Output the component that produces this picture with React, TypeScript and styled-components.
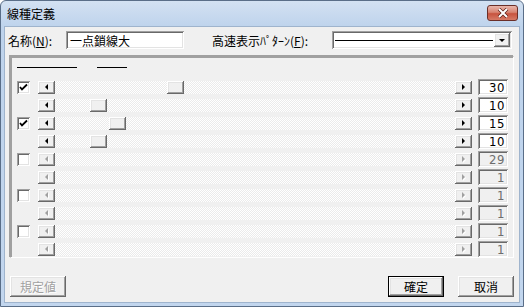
import styled, { createGlobalStyle } from "styled-components";

const GlobalStyle = createGlobalStyle`
  body {
    margin: 0;
    font-family: "Noto Sans CJK JP", "Liberation Sans", sans-serif;
    font-size: 12px;
    background: #fff;
  }
`;

const raised = `inset -1px -1px #696969, inset 1px 1px #ffffff, inset -2px -2px #a0a0a0, inset 2px 2px #e3e3e3`;
const sunken = `inset 1px 1px #a0a0a0, inset -1px -1px #ffffff, inset 2px 2px #696969, inset -2px -2px #e3e3e3`;

const Window = styled.div`
  width: 524px;
  height: 307px;
  box-sizing: border-box;
  border: 1px solid #5a6e88;
  border-radius: 6px 6px 0 0;
  background: linear-gradient(#d3e1f2, #bed3ec 26px, #c2d6ee);
  padding: 0 3px 3px 3px;
  display: flex;
  flex-direction: column;
`;

const TitleBar = styled.div`
  height: 25px;
  display: flex;
  align-items: center;
  justify-content: space-between;
  padding-left: 3px;
  padding-right: 2px;
`;

const Title = styled.span`
  font-size: 12px;
  color: #000;
  line-height: 1;
`;

const CloseButton = styled.div`
  width: 31px;
  height: 16px;
  margin-top: -2px;
  box-sizing: border-box;
  border: 1px solid #6b2f28;
  border-radius: 3px;
  background: linear-gradient(#e9b6ab, #d88472 45%, #c8543f 55%, #d67a66);
  display: flex;
  align-items: center;
  justify-content: center;
`;

const Client = styled.div`
  flex: 1;
  background: #f0f0f0;
  border: 1px solid #9fb4cd;
  display: flex;
  flex-direction: column;
`;

const TopRow = styled.div`
  display: flex;
  align-items: center;
  margin-top: 4px;
  padding-left: 3px;
  height: 18px;
`;

const Label = styled.span<{ $w: number; $ml?: number }>`
  width: ${(p) => p.$w}px;
  margin-left: ${(p) => p.$ml ?? 0}px;
  flex-shrink: 0;
  color: #000;
  white-space: nowrap;
`;

const TextField = styled.div`
  width: 118px;
  height: 18px;
  box-sizing: border-box;
  background: #fff;
  box-shadow: ${sunken};
  padding: 0 4px;
  display: flex;
  align-items: center;
  font-size: 12px;
`;

const Combo = styled.div`
  width: 180px;
  height: 18px;
  box-sizing: border-box;
  background: #fff;
  box-shadow: ${sunken};
  padding: 2px 2px 2px 3px;
  display: flex;
  align-items: center;
  gap: 1px;
`;

const ComboLine = styled.div`
  flex: 1;
  height: 1px;
  background: #000;
`;

const ComboButton = styled.div`
  width: 16px;
  height: 14px;
  background: #f0f0f0;
  box-shadow: ${raised};
  display: flex;
  align-items: center;
  justify-content: center;
`;

const Panel = styled.div`
  margin: 7px 0 0 5px;
  width: 504px;
  height: 202px;
  box-sizing: border-box;
  border-top: 1px solid #a0a0a0;
  border-left: 1px solid #a0a0a0;
  border-right: 1px solid #ffffff;
  border-bottom: 1px solid #ffffff;
  box-shadow: 1px 1px 0 #a0a0a0 inset, -1px -1px 0 #a0a0a0;
  padding: 10px 0 0 6px;
`;

const Samples = styled.div`
  display: flex;
  gap: 20px;
  margin-bottom: 11px;
`;

const SampleLine = styled.div<{ $w: number }>`
  width: ${(p) => p.$w}px;
  height: 1px;
  background: #000;
`;

const Rows = styled.div`
  display: flex;
  flex-direction: column;
  gap: 2px;
`;

const Row = styled.div`
  display: flex;
  align-items: center;
  height: 16px;
`;

const CheckSlot = styled.div`
  width: 13px;
  height: 13px;
  margin-right: 8px;
  flex-shrink: 0;
`;

const CheckBox = styled.div`
  width: 13px;
  height: 13px;
  box-sizing: border-box;
  background: #fff;
  box-shadow: ${sunken};
  display: flex;
  align-items: center;
  justify-content: center;
`;

const Track = styled.div`
  position: relative;
  width: 434px;
  height: 13px;
  display: flex;
  justify-content: space-between;
  background: repeating-conic-gradient(#ffffff 0 25%, #ebebeb 0 50%) 0 0 / 2px 2px;
`;

const ArrowButton = styled.div`
  width: 17px;
  height: 13px;
  box-sizing: border-box;
  background: #f0f0f0;
  box-shadow: ${raised};
  display: flex;
  align-items: center;
  justify-content: center;
`;

const Arrow = styled.span<{ $dir: "left" | "right" | "down"; $off?: boolean }>`
  width: 0;
  height: 0;
  border-style: solid;
  border-color: transparent;
  ${(p) =>
    p.$dir === "left"
      ? `border-width: 3px 3px 3px 0; border-right-color: ${p.$off ? "#a0a0a0" : "#000"};`
      : p.$dir === "right"
      ? `border-width: 3px 0 3px 3px; border-left-color: ${p.$off ? "#a0a0a0" : "#000"};`
      : `border-width: 3px 3px 0 3px; border-top-color: #000;`}
  ${(p) => (p.$off ? "filter: drop-shadow(1px 1px 0 #fff);" : "")}
`;

const Thumb = styled.div`
  position: absolute;
  top: 0;
  width: 17px;
  height: 13px;
  background: #f0f0f0;
  box-shadow: ${raised};
`;

const ValueBox = styled.div<{ $off: boolean }>`
  width: 30px;
  height: 16px;
  margin-left: 6px;
  box-sizing: border-box;
  background: ${(p) => (p.$off ? "#f0f0f0" : "#fff")};
  color: ${(p) => (p.$off ? "#6d6d6d" : "#000")};
  box-shadow: ${sunken};
  padding-right: 3px;
  display: flex;
  align-items: center;
  justify-content: flex-end;
`;

const Digits = styled.span`
  font-family: "DejaVu Sans Condensed", "Liberation Sans Narrow", "Liberation Sans", sans-serif;
  font-size: 13px;
  line-height: 1;
  letter-spacing: 0.5px;
`;

const ButtonBar = styled.div`
  display: flex;
  align-items: center;
  margin-top: 18px;
  padding: 0 5px;
`;

const Button = styled.div<{ $default?: boolean; $off?: boolean; $ml?: number }>`
  width: 56px;
  height: 21px;
  margin-left: ${(p) => p.$ml ?? 0}px;
  box-sizing: border-box;
  background: #f0f0f0;
  border: ${(p) => (p.$default ? "1px solid #000" : "none")};
  box-shadow: ${raised};
  display: flex;
  align-items: center;
  justify-content: center;
  color: ${(p) => (p.$off ? "#a0a0a0" : "#000")};
  text-shadow: ${(p) => (p.$off ? "1px 1px 0 #fff" : "none")};
  font-size: 12px;
`;

type RowData = { check: boolean; checked?: boolean; value: number; off: boolean };

const rows: RowData[] = [
  { check: true, checked: true, value: 30, off: false },
  { check: false, value: 10, off: false },
  { check: true, checked: true, value: 15, off: false },
  { check: false, value: 10, off: false },
  { check: true, checked: false, value: 29, off: true },
  { check: false, value: 1, off: true },
  { check: true, checked: false, value: 1, off: true },
  { check: false, value: 1, off: true },
  { check: true, checked: false, value: 1, off: true },
  { check: false, value: 1, off: true },
];

function CheckMark() {
  return (
    <svg width="9" height="9" viewBox="0 0 9 9">
      <path d="M1 4 L3 6.5 L8 1.5" stroke="#000" strokeWidth="1.8" fill="none" />
    </svg>
  );
}

export default function App() {
  return (
    <>
      <GlobalStyle />
      <Window>
        <TitleBar>
          <Title>線種定義</Title>
          <CloseButton>
            <svg width="12" height="10" viewBox="0 0 12 10">
              <path d="M2 1 L10 9 M10 1 L2 9" stroke="#5a1e16" strokeWidth="3.4" />
              <path d="M2 1 L10 9 M10 1 L2 9" stroke="#fff" strokeWidth="2" />
            </svg>
          </CloseButton>
        </TitleBar>
        <Client>
          <TopRow>
            <Label $w={58}>
              名称(<u>N</u>):
            </Label>
            <TextField>一点鎖線大</TextField>
            <Label $w={120} $ml={28}>
              高速表示ﾊﾟﾀｰﾝ(<u>F</u>):
            </Label>
            <Combo>
              <ComboLine />
              <ComboButton>
                <Arrow $dir="down" />
              </ComboButton>
            </Combo>
          </TopRow>
          <Panel>
            <Samples>
              <SampleLine $w={60} />
              <SampleLine $w={30} />
            </Samples>
            <Rows>
              {rows.map((r, i) => (
                <Row key={i}>
                  <CheckSlot>
                    {r.check && <CheckBox>{r.checked && <CheckMark />}</CheckBox>}
                  </CheckSlot>
                  <Track>
                    <ArrowButton>
                      <Arrow $dir="left" $off={r.off} />
                    </ArrowButton>
                    {!r.off && <Thumb style={{ left: 17 + (r.value - 1) * 3.85 }} />}
                    <ArrowButton>
                      <Arrow $dir="right" $off={r.off} />
                    </ArrowButton>
                  </Track>
                  <ValueBox $off={r.off}>
                    <Digits>{r.value}</Digits>
                  </ValueBox>
                </Row>
              ))}
            </Rows>
          </Panel>
          <ButtonBar>
            <Button $off>規定値</Button>
            <Button $default $ml={322}>
              確定
            </Button>
            <Button $ml={14}>取消</Button>
          </ButtonBar>
        </Client>
      </Window>
    </>
  );
}
